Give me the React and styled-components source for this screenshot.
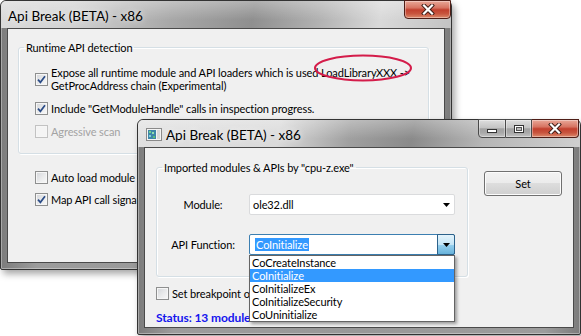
import React from 'react';
import styled, { createGlobalStyle } from 'styled-components';

const GlobalStyle = createGlobalStyle`
  html, body {
    margin: 0;
    padding: 0;
    background: #fff;
  }
  body {
    font-family: Lato, "Noto Sans", sans-serif;
    font-size: 11px;
    letter-spacing: -0.1px;
    color: #000;
  }
`;

const Desktop = styled.div`
  position: relative;
  width: 581px;
  height: 336px;
  overflow: hidden;
  background: #fff;
`;

// a window sits on a free desktop, so it is placed by coordinates
const Window = styled.div`
  position: absolute;
  left: ${p => p.$x}px;
  top: ${p => p.$y}px;
  width: ${p => p.$w}px;
  height: ${p => p.$h}px;
  box-sizing: border-box;
  display: flex;
  flex-direction: column;
  padding: 0 6px 6px;
  border: 1px solid #333;
  border-radius: 6px 6px 2px 2px;
  background: linear-gradient(to right, #7c7c7c, #9c9c9c 8%, #989898 50%, #9c9c9c 92%, #7c7c7c);
  box-shadow: 3px 4px 7px rgba(0, 0, 0, 0.35), inset 0 0 0 1px rgba(255, 255, 255, 0.35);
`;

const TitleBar = styled.div`
  flex: none;
  height: 27px;
  margin: 0 -6px;
  padding: 0 ${p => p.$padR}px 0 ${p => p.$padL}px;
  display: flex;
  align-items: flex-start;
  border-radius: 5px 5px 0 0;
  background: ${p => p.$bg};
`;

const TitleText = styled.div`
  margin-top: 7px;
  font-size: 13.5px;
  line-height: 16px;
  letter-spacing: 0;
  white-space: nowrap;
  color: #000;
  text-shadow: 0 0 6px rgba(255, 255, 255, 0.9);
`;

const TitleIcon = styled.svg`
  flex: none;
  margin: 8px 4px 0 0;
`;

const CaptionButtons = styled.div`
  margin-left: auto;
  margin-top: -1px;
  display: flex;
`;

const CaptionButton = styled.div`
  width: ${p => p.$w}px;
  height: 19px;
  box-sizing: border-box;
  display: flex;
  align-items: center;
  justify-content: center;
  border: 1px solid ${p => (p.$close ? '#4e1d16' : '#4a4a4a')};
  border-left-width: ${p => (p.$first ? 1 : 0)}px;
  border-radius: ${p => p.$radius};
  background: ${p =>
    p.$close
      ? 'linear-gradient(#e9a898 0%, #d77462 40%, #c2402e 52%, #c8553e 75%, #dc8a6c 100%)'
      : 'linear-gradient(#dedede 0%, #c4c4c4 45%, #a2a2a2 52%, #a8a8a8 75%, #c3c3c3 100%)'};
  box-shadow: inset 0 0 0 1px rgba(255, 255, 255, 0.35);
`;

const Client = styled.div`
  flex: 1;
  min-height: 0;
  display: flex;
  flex-direction: ${p => (p.$row ? 'row' : 'column')};
  border: 1px solid #4a4a4a;
  background: #f0f0f0;
`;

const GroupBox = styled.fieldset`
  margin: ${p => p.$m};
  padding: 0;
  min-width: 0;
  border: 1px solid #d5dfe5;
  border-radius: 3px;
  box-shadow: inset 1px 1px 0 #fff, 1px 1px 0 #fff;
`;

const Legend = styled.legend`
  margin-left: 5px;
  padding: 0 2px;
  line-height: 15px;
  font-size: 11px;
`;

const GroupBody = styled.div`
  padding: ${p => p.$p};
  display: flex;
  flex-direction: column;
  gap: ${p => p.$gap || 0}px;
`;

const CheckRow = styled.div`
  display: flex;
  align-items: center;
  gap: 3px;
  margin: ${p => p.$m || '0'};
  line-height: 13px;
  white-space: nowrap;
  color: ${p => (p.$disabled ? '#a3a3a3' : '#000')};
`;

const Box = styled.span`
  flex: none;
  width: 13px;
  height: 13px;
  box-sizing: border-box;
  display: flex;
  align-items: center;
  justify-content: center;
  border: 1px solid ${p => (p.$disabled ? '#c2c2c2' : '#8e8f8f')};
  background: ${p =>
    p.$disabled ? '#f4f4f4' : 'linear-gradient(135deg, #d3d5d9 0%, #eaebec 55%, #f9f9f9 100%)'};
  box-shadow: inset 0 0 0 1px #f6f6f6;
`;

const FieldGrid = styled.div`
  display: grid;
  grid-template-columns: 92px 206px;
  row-gap: 19px;
  align-items: center;
  padding: 19px 13px 21px 0;
`;

const FieldLabel = styled.div`
  text-align: center;
  white-space: nowrap;
`;

const Combo = styled.div`
  position: relative;
  height: 21px;
  box-sizing: border-box;
  display: flex;
  align-items: center;
  padding-left: ${p => p.$pad}px;
  background: #fff;
  border: 1px solid ${p => (p.$focus ? '#3c7fb1' : '#dadbdd')};
  border-radius: 2px;
`;

const ComboText = styled.span`
  flex: 1;
  line-height: 13px;
`;

const Selected = styled.span`
  padding: 0 1px;
  line-height: 13px;
  background: #3399ff;
  color: #fff;
`;

const DropButton = styled.div`
  flex: none;
  width: 16px;
  align-self: stretch;
  display: flex;
  align-items: center;
  justify-content: center;
  ${p =>
    p.$pressed &&
    `
    margin: -1px -1px -1px 0;
    border: 1px solid #2c628b;
    border-radius: 0 2px 2px 0;
    background: linear-gradient(#e5f4fc 0%, #c4e5f6 50%, #98d1ef 50%, #68b3db 100%);
  `}
`;

const DropList = styled.div`
  position: absolute;
  z-index: 2;
  top: calc(100% + 1px);
  left: -1px;
  right: -1px;
  border: 1px solid #646464;
  background: #fff;
  box-shadow: 2px 2px 3px rgba(0, 0, 0, 0.35);
`;

const DropItem = styled.div`
  padding-left: 2px;
  line-height: 13px;
  white-space: nowrap;
  background: ${p => (p.$active ? '#3399ff' : 'transparent')};
  color: ${p => (p.$active ? '#fff' : '#000')};
`;

const LeftColumn = styled.div`
  display: flex;
  flex-direction: column;
  width: 323px;
  flex: none;
`;

const RightColumn = styled.div`
  flex: 1;
  padding: 23px 11px 0 16px;
`;

const PushButton = styled.div`
  height: 25px;
  box-sizing: border-box;
  display: flex;
  align-items: center;
  justify-content: center;
  border: 1px solid #707070;
  border-radius: 3px;
  background: linear-gradient(#f2f2f2 0%, #ebebeb 50%, #dddddd 50%, #cfcfcf 100%);
  box-shadow: inset 0 0 0 1px #fcfcfc;
`;

const Status = styled.div`
  margin: 11px 0 0 11px;
  font-weight: bold;
  font-size: 12px;
  line-height: 14px;
  color: #1414ee;
  white-space: nowrap;
`;

const Annotation = styled.svg`
  position: absolute;
  left: 312px;
  top: 53px;
`;

const backTitleBg = `
  linear-gradient(to bottom, rgba(255,255,255,0.3), rgba(255,255,255,0) 70%),
  linear-gradient(100deg, #dadada 0%, #d3d3d3 16%, #a8a8a8 38%, #8f8f8f 56%, #b0b0b0 70%, #d9d9d9 84%, #c3c3c3 100%)
`;

const frontTitleBg = `
  linear-gradient(to bottom, rgba(255,255,255,0.3), rgba(255,255,255,0) 70%),
  linear-gradient(100deg, #e0e0e0 0%, #dadada 32%, #a0a0a0 48%, #8a8a8a 62%, #b6b6b6 78%, #cfcfcf 100%)
`;

function CheckBox({ checked, disabled }) {
  return (
    <Box $disabled={disabled}>
      {checked && (
        <svg width="9" height="9" viewBox="0 0 9 9">
          <path d="M1 4.6 L3.4 7.3 L8 1.2" fill="none" stroke="#2a4b86" strokeWidth="1.7" />
        </svg>
      )}
    </Box>
  );
}

function Arrow() {
  return (
    <svg width="7" height="4" viewBox="0 0 7 4">
      <path d="M0 0h7L3.5 4z" fill="#000" />
    </svg>
  );
}

function CloseGlyph() {
  return (
    <svg width="14" height="11" viewBox="0 0 14 11">
      <path d="M3 1.5 L11 9.5 M11 1.5 L3 9.5" stroke="#3a1a14" strokeWidth="4" strokeLinecap="square" />
      <path d="M3 1.5 L11 9.5 M11 1.5 L3 9.5" stroke="#fff" strokeWidth="2.2" strokeLinecap="square" />
    </svg>
  );
}

function MinGlyph() {
  return (
    <svg width="10" height="10" viewBox="0 0 10 10">
      <rect x="0.5" y="5.5" width="9" height="3" fill="#fff" stroke="#333" />
    </svg>
  );
}

function MaxGlyph() {
  return (
    <svg width="10" height="10" viewBox="0 0 10 10">
      <rect x="0.5" y="1.5" width="9" height="7" fill="none" stroke="#333" />
      <rect x="1.5" y="2.5" width="7" height="5" fill="none" stroke="#fff" />
      <rect x="2.5" y="3.5" width="5" height="3" fill="#bdbdbd" stroke="#555" />
    </svg>
  );
}

function AppIcon() {
  return (
    <TitleIcon width="16" height="13" viewBox="0 0 16 13">
      <rect x="0.5" y="0.5" width="15" height="12" fill="#f4f4f4" stroke="#8a8a8a" />
      <rect x="2" y="2" width="8" height="9" fill="#3f86a8" />
      <rect x="3" y="3" width="2" height="2" fill="#6fd08a" />
      <rect x="6" y="4" width="2" height="2" fill="#8fe0b0" />
      <rect x="3" y="7" width="2" height="2" fill="#7ccfe0" />
      <rect x="7" y="8" width="2" height="2" fill="#5cc07a" />
      <rect x="11" y="2" width="3" height="9" fill="#d8d8d8" />
    </TitleIcon>
  );
}

const apiItems = [
  'CoCreateInstance',
  'CoInitialize',
  'CoInitializeEx',
  'CoInitializeSecurity',
  'CoUninitialize',
];

export default function App() {
  return (
    <Desktop>
      <GlobalStyle />

      <Window $x={0} $y={0} $w={452} $h={270}>
        <TitleBar $bg={backTitleBg} $padL={7} $padR={0}>
          <TitleText>Api Break (BETA) - x86</TitleText>
          <CaptionButtons>
            <CaptionButton $close $first $w={47} $radius="0 0 4px 4px">
              <CloseGlyph />
            </CaptionButton>
          </CaptionButtons>
        </TitleBar>
        <Client>
          <GroupBox $m="11px 15px 0 10px">
            <Legend>Runtime API detection</Legend>
            <GroupBody $p="11px 0 15px 16px" $gap={10}>
              <CheckRow>
                <CheckBox checked />
                <span>
                  Expose all runtime module and API loaders which is used LoadLibraryXXX -&gt;
                  <br />
                  GetProcAddress chain (Experimental)
                </span>
              </CheckRow>
              <CheckRow>
                <CheckBox checked />
                <span>Include "GetModuleHandle" calls in inspection progress.</span>
              </CheckRow>
              <CheckRow $disabled>
                <CheckBox disabled />
                <span>Agressive scan</span>
              </CheckRow>
            </GroupBody>
          </GroupBox>
          <CheckRow $m="17px 0 0 27px">
            <CheckBox />
            <span>Auto load module and API list on startup</span>
          </CheckRow>
          <CheckRow $m="9px 0 0 27px">
            <CheckBox checked />
            <span>Map API call signatures</span>
          </CheckRow>
        </Client>
      </Window>

      <Annotation width="104" height="32" viewBox="0 0 104 32">
        <ellipse cx="51" cy="15" rx="48" ry="12.5" fill="none" stroke="#d41c4a" strokeWidth="2" />
      </Annotation>

      <Window $x={137} $y={119} $w={444} $h={216}>
        <TitleBar $bg={frontTitleBg} $padL={8} $padR={1}>
          <AppIcon />
          <TitleText>Api Break (BETA) - x86</TitleText>
          <CaptionButtons>
            <CaptionButton $first $w={28} $radius="0 0 0 4px">
              <MinGlyph />
            </CaptionButton>
            <CaptionButton $w={26} $radius="0">
              <MaxGlyph />
            </CaptionButton>
            <CaptionButton $close $w={47} $radius="0 0 4px 0">
              <CloseGlyph />
            </CaptionButton>
          </CaptionButtons>
        </TitleBar>
        <Client $row>
          <LeftColumn>
            <GroupBox $m="12px 0 0 11px">
              <Legend>Imported modules &amp; APIs by "cpu-z.exe"</Legend>
              <FieldGrid>
                <FieldLabel>Module:</FieldLabel>
                <Combo $pad={3}>
                  <ComboText>ole32.dll</ComboText>
                  <DropButton>
                    <Arrow />
                  </DropButton>
                </Combo>
                <FieldLabel>API Function:</FieldLabel>
                <Combo $focus $pad={5}>
                  <ComboText>
                    <Selected>CoInitialize</Selected>
                  </ComboText>
                  <DropButton $pressed>
                    <Arrow />
                  </DropButton>
                  <DropList>
                    {apiItems.map(item => (
                      <DropItem key={item} $active={item === 'CoInitialize'}>
                        {item}
                      </DropItem>
                    ))}
                  </DropList>
                </Combo>
              </FieldGrid>
            </GroupBox>
            <CheckRow $m="10px 0 0 11px">
              <CheckBox />
              <span>Set breakpoint on selected API</span>
            </CheckRow>
            <Status>Status: 13 modules loaded</Status>
          </LeftColumn>
          <RightColumn>
            <PushButton>Set</PushButton>
          </RightColumn>
        </Client>
      </Window>
    </Desktop>
  );
}
